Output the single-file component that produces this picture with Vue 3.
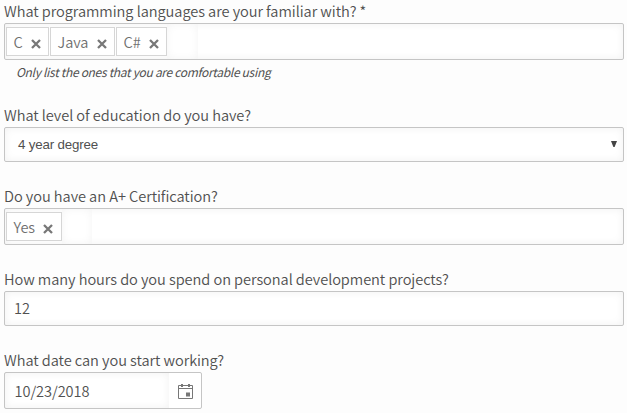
<script setup>
const languages = [
  { name: 'C', size: 'tag-c' },
  { name: 'Java', size: 'tag-java' },
  { name: 'C#', size: 'tag-sharp' },
]
</script>

<template>
  <form class="survey" @submit.prevent>
    <section class="question q-languages">
      <div class="label">What programming languages are your familiar with? *</div>
      <div class="box tall tags">
        <span v-for="tag in languages" :key="tag.name" class="tag" :class="tag.size">
          <span>{{ tag.name }}</span>
          <svg class="cross" viewBox="0 0 10 10"><path d="M1 1L9 9M9 1L1 9" /></svg>
        </span>
        <span class="entry"></span>
      </div>
      <div class="hint">Only list the ones that you are comfortable using</div>
    </section>

    <section class="question q-education">
      <div class="label">What level of education do you have?</div>
      <div class="box select">
        <span>4 year degree</span>
        <svg class="arrow" viewBox="0 0 6 6"><path d="M0 0H6L3.6 6H2.4Z" /></svg>
      </div>
    </section>

    <section class="question q-cert">
      <div class="label">Do you have an A+ Certification?</div>
      <div class="box tall tags">
        <span class="tag tag-yes">
          <span>Yes</span>
          <svg class="cross" viewBox="0 0 10 10"><path d="M1 1L9 9M9 1L1 9" /></svg>
        </span>
        <span class="entry yes-entry"></span>
      </div>
    </section>

    <section class="question q-hours">
      <div class="label">How many hours do you spend on personal development projects?</div>
      <div class="box value">12</div>
    </section>

    <section class="question">
      <div class="label">What date can you start working?</div>
      <div class="box tall date">
        <span class="date-value">10/23/2018</span>
        <span class="date-button">
          <svg class="calendar" viewBox="0 0 15 16">
            <path class="lines" d="M.5 2.5H14.5V15.5H.5ZM.5 5.5H14.5" />
            <path class="day" d="M3 1H5V4H3ZM10 1H12V4H10ZM8 9.5H12V13.5H8Z" />
          </svg>
        </span>
      </div>
    </section>
  </form>
</template>

<style>
body {
  background: #fdfdfd;
}
</style>

<style scoped>
.survey {
  box-sizing: border-box;
  width: 627px;
  height: 413px;
  padding: 0 3px 0 4px;
  overflow: hidden;
  color: #505050;
  font-family: "Noto Sans CJK SC", "Noto Sans", sans-serif;
  font-size: 14.6px;
  font-weight: 350;
  letter-spacing: -0.06px;
  white-space: nowrap;
}
.question {
  display: flex;
  flex-direction: column;
}
.q-languages { height: 104px; }
.q-education { height: 81px; }
.q-cert { height: 83px; }
.q-hours { height: 81px; }
.label {
  height: 23px;
  line-height: 22px;
}
.box {
  box-sizing: border-box;
  width: 620px;
  height: 35px;
  flex: none;
  display: flex;
  align-items: center;
  border: 1px solid #c5c5c5;
  border-radius: 2px;
  background: #fff;
  box-shadow: inset 0 0 8px rgba(0, 0, 0, 0.06);
}
.tall { height: 37px; }
.tags {
  padding: 0 1px;
  align-items: center;
}
.tag {
  box-sizing: border-box;
  height: 29px;
  margin-right: 1px;
  padding: 0 7px 0 6.5px;
  display: flex;
  align-items: center;
  justify-content: space-between;
  border: 1px solid #d6d6d6;
  background: #fff;
  color: #707070;
  line-height: 27px;
}
.tag-c { width: 43px; }
.tag-java { width: 65px; }
.tag-sharp { width: 51px; }
.tag-yes {
  width: 56px;
  padding-right: 8px;
}
.cross {
  width: 10px;
  height: 10px;
  margin-top: 4px;
  fill: none;
  stroke: #777;
  stroke-width: 2.3;
}
.entry {
  width: 31px;
  height: 35px;
  margin-left: -1px;
  background: #fff;
  box-shadow: inset 0 0 8px rgba(0, 0, 0, 0.05);
}
.yes-entry { width: 30px; }
.hint {
  padding: 2px 0 0 12px;
  line-height: 20px;
  font-size: 12px;
  font-weight: 400;
  font-style: italic;
  letter-spacing: -0.31px;
}
.select {
  justify-content: space-between;
  padding: 0 6px 0 13px;
  font-family: "Liberation Sans", Arial, sans-serif;
  font-size: 13.33px;
  letter-spacing: -0.18px;
}
.arrow {
  width: 6px;
  height: 6px;
  margin-top: -2px;
  fill: #444;
}
.value {
  padding: 0 10px 2px 9px;
}
.date {
  width: 198px;
  box-shadow: none;
}
.date-value {
  box-sizing: border-box;
  width: 164px;
  height: 35px;
  padding-left: 9.5px;
  line-height: 36px;
  box-shadow: inset 0 0 8px rgba(0, 0, 0, 0.06);
}
.date-button {
  width: 32px;
  display: flex;
  justify-content: center;
}
.calendar {
  width: 15px;
  height: 16px;
}
.lines {
  fill: none;
  stroke: #777;
}
.day { fill: #777; }
</style>
